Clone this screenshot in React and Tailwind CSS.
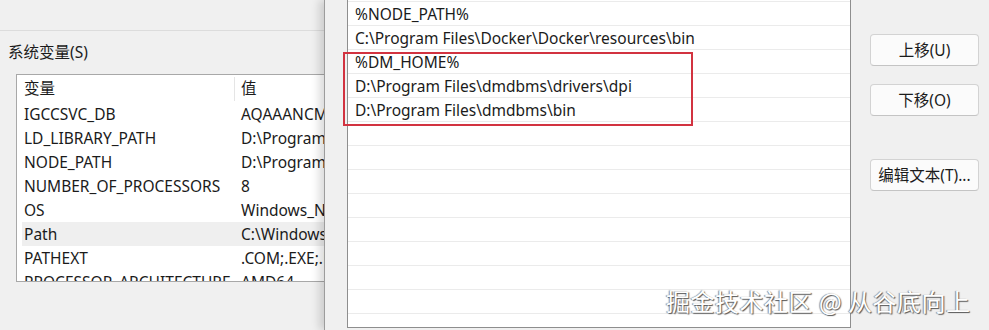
import React from 'react'

const sysVars = [
  ['IGCCSVC_DB', 'AQAAANCMnd8BFdERjHoAwE/Cl+sBAAAA'],
  ['LD_LIBRARY_PATH', 'D:\\Program Files\\dmdbms\\bin'],
  ['NODE_PATH', 'D:\\Program Files\\nodejs\\node_global'],
  ['NUMBER_OF_PROCESSORS', '8'],
  ['OS', 'Windows_NT'],
  ['Path', 'C:\\Windows\\system32;C:\\Windows'],
  ['PATHEXT', '.COM;.EXE;.BAT;.CMD;.VBS'],
  ['PROCESSOR_ARCHITECTURE', 'AMD64'],
]

const pathRows = [
  '',
  '%NODE_PATH%',
  'C:\\Program Files\\Docker\\Docker\\resources\\bin',
  '%DM_HOME%',
  'D:\\Program Files\\dmdbms\\drivers\\dpi',
  'D:\\Program Files\\dmdbms\\bin',
  '', '', '', '', '', '', '', '', '',
]

const SystemVars = () => (
  <div className="w-[324px] shrink-0 overflow-hidden">
    <div className="h-[31px] border-b border-[#dcdcdc]" />
    <div className="pl-[8px] pt-[11px] leading-[20px]">系统变量(S)</div>
    <div className="ml-[16px] mt-[12px] h-[208px] w-[400px] overflow-hidden border border-[#a8a8a8] bg-white">
      <div className="flex h-[27px] items-center">
        <div className="w-[217px] shrink-0 pl-[7px]">变量</div>
        <div className="h-[24px] w-px shrink-0 bg-[#e5e5e5]" />
        <div className="pl-[6px]">值</div>
      </div>
      {sysVars.map(([name, value]) => (
        <div
          key={name}
          className={`ml-[5px] flex h-[24px] items-center pt-px whitespace-nowrap ${name === 'Path' ? 'bg-[#efefef]' : ''}`}
        >
          <div className="w-[213px] shrink-0 pl-[2px]">{name}</div>
          <div className="pl-[6px]">{value}</div>
        </div>
      ))}
    </div>
  </div>
)

const Button = ({ children, className = '' }) => (
  <button className={`h-[32px] w-[109px] rounded-[4px] border border-[#d3d3d3] border-b-[#c4c4c4] bg-[#fbfbfb] pt-px text-[15.5px] text-[#1b1b1b] ${className}`}>
    {children}
  </button>
)

const EditPath = () => (
  <div className="flex flex-1 border-l border-[#9c9c9c] bg-[#f0f0f0] shadow-[-5px_0_8px_rgba(0,0,0,0.14)]">
    <div className="ml-[22px] mt-[-23px] h-[351px] w-[504px] shrink-0 overflow-hidden border border-[#8e8e8e] bg-white">
      {pathRows.map((row, i) => (
        <div key={i} className="flex h-[24px] items-center border-b border-[#ebebeb] pl-[7px] pt-[2px] whitespace-nowrap">
          {row}
        </div>
      ))}
    </div>
    <div className="ml-[19px] flex flex-col pt-[34px]">
      <Button>上移(U)</Button>
      <Button className="mt-[18px]">下移(O)</Button>
      <Button className="mt-[43px]">编辑文本(T)...</Button>
    </div>
  </div>
)

export default function App() {
  return (
    <div className="relative flex h-[330px] w-[989px] overflow-hidden bg-[#f0f0f0] font-['Noto_Sans','Noto_Sans_CJK_SC',sans-serif] text-[15.5px] text-[#1b1b1b]">
      <SystemVars />
      <EditPath />

      {/* highlight box drawn over the list */}
      <div className="pointer-events-none absolute left-[343px] top-[52px] h-[74px] w-[350px] border-2 border-[#d23340]" />

      <div className="absolute left-[666px] top-[285px] whitespace-nowrap font-['Noto_Sans_CJK_SC',sans-serif] text-[24px] leading-[32px] tracking-[0.5px] text-white [text-shadow:1px_1px_1px_#555,-1px_0_1px_#888]">
        掘金技术社区 @ 从谷底向上
      </div>
    </div>
  )
}
